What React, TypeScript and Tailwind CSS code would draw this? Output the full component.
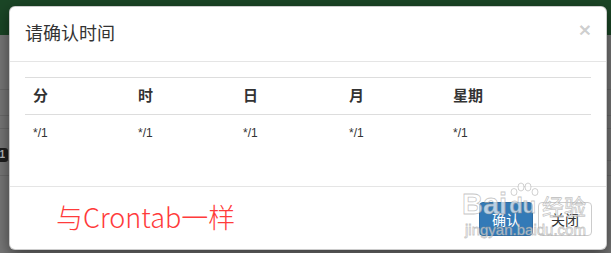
const cols = ["分", "时", "日", "月", "星期"];

export default function App() {
  return (
    <div className="relative w-[611px] h-[253px] overflow-hidden bg-[#777777] font-['Liberation_Sans','Noto_Sans_CJK_SC',sans-serif]">
      {/* page behind the backdrop */}
      <div className="absolute inset-0">
        <div className="h-[35px] bg-[#1b4626]" />
        <div className="absolute left-0 right-0 top-[89px] h-px bg-[#6a6a6a]" />
        <div className="absolute left-0 right-0 top-[115px] h-px bg-[#6a6a6a]" />
        <div className="absolute left-0 right-0 top-[128px] h-px bg-[#6a6a6a]" />
        <div className="absolute left-0 right-0 top-[160px] h-px bg-[#6a6a6a]" />
        <div className="absolute left-0 right-0 top-[175px] h-px bg-[#6a6a6a]" />
        <div className="absolute left-[-6px] top-[148px] h-[14px] w-[14px] rounded-[3px] bg-[#1e1e1e] text-[10px] leading-[14px] text-right pr-[3px] text-[#bbb] font-bold">
          1
        </div>
      </div>

      {/* modal */}
      <div className="relative z-10 ml-[9px] mt-[6px] w-[598px] h-[244px] bg-white rounded-[6px] border border-black/20 shadow-[0_5px_15px_rgba(0,0,0,0.5)]">
        <div className="h-[55px] border-b border-[#e5e5e5] px-[15px] flex items-center justify-between">
          <h4 className="text-[18px] text-[#333] font-normal">请确认时间</h4>
          <span className="text-[21px] leading-none font-bold text-black/20 -mt-[9px]">×</span>
        </div>

        <div className="h-[124px] pt-[15px] px-[15px]">
          <div className="border-t border-[#dddddd]">
            <div className="grid grid-cols-[105px_105px_106px_104px_1fr] h-[37px] border-b border-[#dddddd] items-center">
              {cols.map((c) => (
                <div key={c} className="px-[8px] text-[15px] font-bold text-[#333]">
                  {c}
                </div>
              ))}
            </div>
            <div className="grid grid-cols-[105px_105px_106px_104px_1fr] h-[36px] items-center">
              {cols.map((c) => (
                <div key={c} className="px-[8px] text-[12px] text-[#333]">
                  */1
                </div>
              ))}
            </div>
          </div>
        </div>

        <div className="h-[63px] border-t border-[#e5e5e5] pl-[46px] pr-[14px] flex items-center justify-between">
          <span className="text-[27px] font-light text-[#ff3b3b] font-['Noto_Sans_CJK_SC',sans-serif] mt-[-2px]">
            与Crontab一样
          </span>
          <div className="flex gap-[5px] mt-[2px]">
            <button className="h-[34px] px-[12px] rounded-[4px] bg-[#337ab7] border border-[#2e6da4] text-white text-[14px] font-['Noto_Sans_CJK_SC',sans-serif]">
              确认
            </button>
            <button className="h-[34px] px-[12px] rounded-[4px] bg-white border border-[#cccccc] text-[#333] text-[14px] font-['Noto_Sans_CJK_SC',sans-serif]">
              关闭
            </button>
          </div>
        </div>
      </div>

      {/* watermark */}
      <div className="absolute z-20 left-[462px] top-[188px] w-[140px] pointer-events-none select-none text-white/65 [-webkit-text-stroke:0.8px_rgba(140,140,140,0.5)]">
        <div className="flex items-end">
          <span className="text-[29px] font-bold leading-[32px] font-['Liberation_Sans',sans-serif]">Bai</span>
          <span className="relative text-[22px] font-bold leading-[28px] px-[2px] font-['Liberation_Sans',sans-serif]">
            <svg className="absolute left-[2px] top-[-10px]" width="30" height="14" viewBox="0 0 30 14">
              <g fill="rgba(255,255,255,0.6)" stroke="rgba(140,140,140,0.5)" strokeWidth="0.8">
                <ellipse cx="5" cy="10" rx="3" ry="3.5" />
                <ellipse cx="12" cy="5" rx="3" ry="4" />
                <ellipse cx="19" cy="5" rx="3" ry="4" />
                <ellipse cx="26" cy="10" rx="3" ry="3.5" />
              </g>
            </svg>
            du
          </span>
          <span className="text-[22px] leading-[30px] ml-[4px] font-['Noto_Sans_CJK_SC',sans-serif]">经验</span>
        </div>
        <div className="text-[15px] leading-[20px] ml-[3px] font-['Liberation_Sans',sans-serif]">jingyan.baidu.com</div>
      </div>
    </div>
  );
}
